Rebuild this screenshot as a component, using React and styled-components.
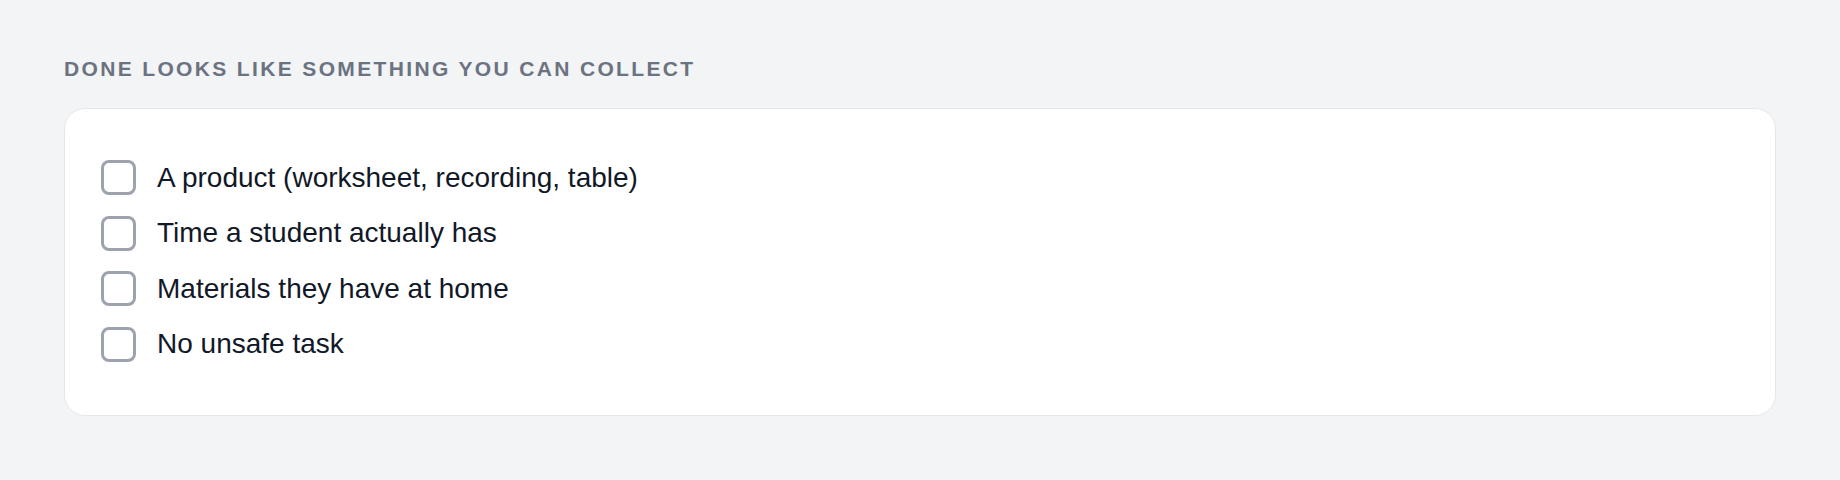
import React, {useState} from 'react';
import styled, {createGlobalStyle} from 'styled-components';

const items = [
  'A product (worksheet, recording, table)',
  'Time a student actually has',
  'Materials they have at home',
  'No unsafe task',
];

export default function App() {
  const [checked, setChecked] = useState({});

  return (
    <Page>
      <GlobalStyle />
      <Heading>Done looks like something you can collect</Heading>
      <Card>
        <List>
          {items.map((label, i) => (
            <Row key={label}>
              <Box
                type="checkbox"
                checked={!!checked[i]}
                onChange={() => setChecked({...checked, [i]: !checked[i]})}
              />
              <Label>{label}</Label>
            </Row>
          ))}
        </List>
      </Card>
    </Page>
  );
}

const GlobalStyle = createGlobalStyle`
  html, body {
    margin: 0;
    background: #f3f4f6;
  }
`;

const Page = styled.div`
  min-height: 480px;
  padding: 55px 64px 64px;
  box-sizing: border-box;
  font-family: 'Liberation Sans', Arial, sans-serif;
  background: #f3f4f6;
`;

const Heading = styled.h2`
  margin: 0 0 25px;
  font-size: 21px;
  line-height: 28px;
  font-weight: 700;
  letter-spacing: 2.35px;
  text-transform: uppercase;
  color: #6b7280;
`;

const Card = styled.div`
  padding: 51px 36px 53px;
  border: 1.5px solid #e5e7eb;
  border-radius: 21px;
  background: #ffffff;
`;

const List = styled.div`
  display: flex;
  flex-direction: column;
  gap: 20px;
`;

const Row = styled.label`
  display: flex;
  align-items: center;
  gap: 21px;
  height: 35.5px;
  cursor: pointer;
`;

const Box = styled.input`
  appearance: none;
  flex: none;
  margin: 0;
  width: 35px;
  height: 35px;
  border: 3px solid #9ca3af;
  border-radius: 8px;
  background: #ffffff;
  box-sizing: border-box;
  cursor: pointer;

  &:checked {
    background: #2563eb;
    border-color: #2563eb;
  }
`;

const Label = styled.span`
  font-size: 28px;
  line-height: 36px;
  color: #111827;
`;
